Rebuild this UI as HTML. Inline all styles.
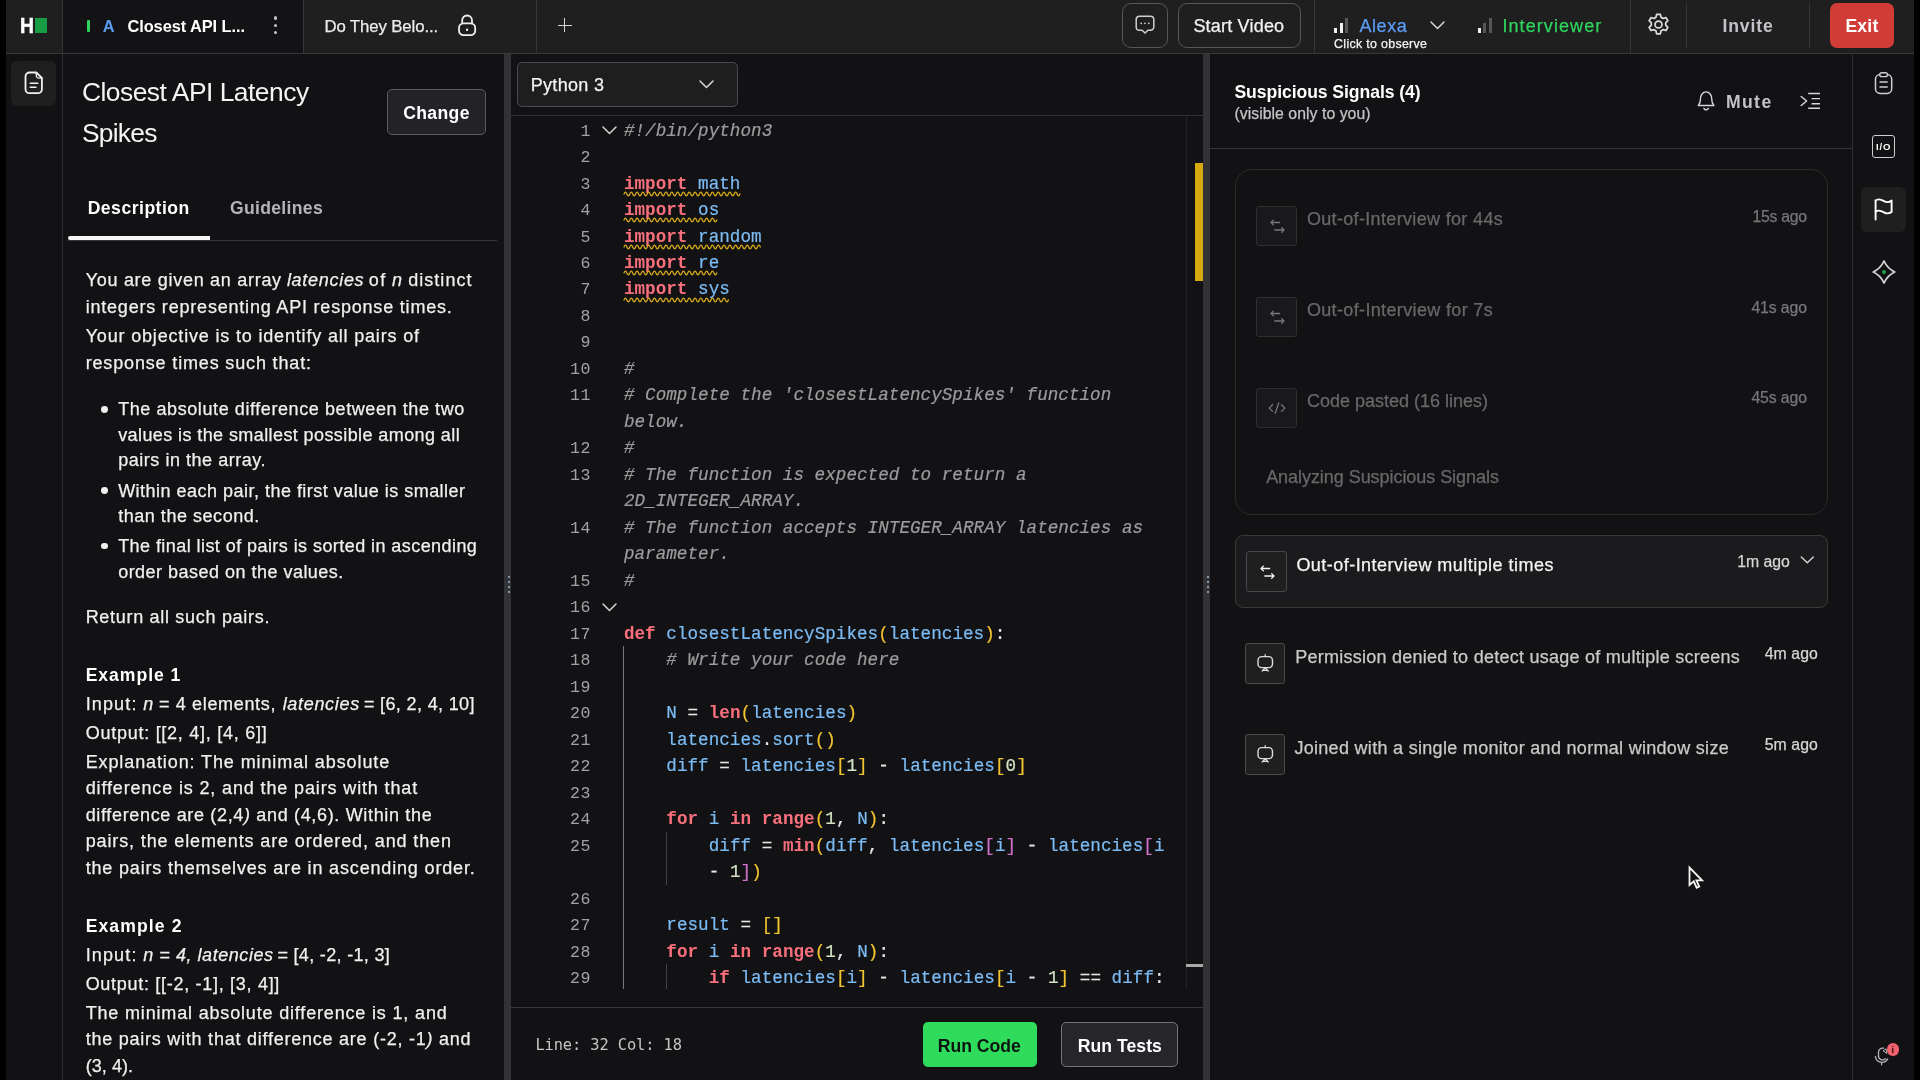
<!DOCTYPE html>
<html lang="en">
<head>
<meta charset="utf-8">
<title>Closest API Latency Spikes - Interview</title>
<style>
*{box-sizing:border-box;margin:0;padding:0}
html,body{width:1920px;height:1080px;overflow:hidden;background:#000}
body{position:relative;font-family:"Liberation Sans",sans-serif;color:#fff}
#root{position:absolute;left:0;top:0;width:1920px;height:1080px;will-change:transform}
#app{position:absolute;left:6px;top:0;width:1908px;height:1080px;background:#121214;overflow:hidden}
.b{position:absolute;display:block}
.t{position:absolute;white-space:pre;line-height:1;font-family:"Liberation Sans",sans-serif}
.r{-webkit-text-stroke:0.25px}
.m{-webkit-text-stroke:0.2px;font-family:"Liberation Mono",monospace}
.d{font-family:"DejaVu Sans Mono","Liberation Mono",monospace}
i{font-style:italic}
b{font-weight:700;-webkit-text-stroke:0}
</style>
</head>
<body>
<div id="root">
<div id="app"></div>
<!-- top -->
<div class="b" style="left:6px;top:0px;width:1908px;height:53px;background:#1f1f1f;"></div>
<div class="b" style="left:6px;top:53px;width:1908px;height:1px;background:#37373b;"></div>
<div class="b" style="left:62px;top:0px;width:1px;height:53px;background:#37373b;"></div>
<div class="t" style="left:19.90px;top:16px;font-size:21.5px;color:#fff;font-weight:700;transform:scaleX(0.9);transform-origin:0 0;-webkit-text-stroke:0.5px;">H</div>
<div class="b" style="left:35px;top:18px;width:12px;height:15px;background:#189c44;"></div>
<div class="b" style="left:63px;top:0px;width:240px;height:53px;background:#131315;"></div>
<div class="b" style="left:303px;top:0px;width:1px;height:53px;background:#37373b;"></div>
<div class="b" style="left:87.2px;top:20px;width:2.6px;height:12px;background:#2fd45c;border-radius:1px;"></div>
<div class="t" style="letter-spacing:0.956px;left:102.80px;top:18px;font-size:16.4px;color:#5b9cf0;font-weight:700;">A</div>
<div class="t" style="letter-spacing:-0.070px;left:127.40px;top:18px;font-size:16.4px;color:#fff;font-weight:700;">Closest API L...</div>
<div class="b" style="left:273.7px;top:16.4px;width:3.2px;height:3.2px;background:#c4c4c8;border-radius:50%;"></div>
<div class="b" style="left:273.7px;top:23.599999999999998px;width:3.2px;height:3.2px;background:#c4c4c8;border-radius:50%;"></div>
<div class="b" style="left:273.7px;top:30.9px;width:3.2px;height:3.2px;background:#c4c4c8;border-radius:50%;"></div>
<div class="t r" style="letter-spacing:-0.111px;left:324.40px;top:19px;font-size:16.8px;color:#ececec;">Do They Belo...</div>
<svg class="b" style="left:456px;top:14px;" width="22" height="23" viewBox="0 0 22 23" fill="none" stroke-linecap="round" stroke-linejoin="round"><path d="M6.200 9.300V6.400a4.900 4.900 0 0 1 9.800 0v2.900" stroke="#f0f0f0" stroke-width="1.800"/><rect x="3" y="9.300" width="16.200" height="11.900" rx="4.600" stroke="#f0f0f0" stroke-width="1.800"/><path d="M11.100 14.600v2.400" stroke="#f0f0f0" stroke-width="1.900" stroke-linecap="butt"/></svg>
<div class="b" style="left:536px;top:0px;width:1px;height:53px;background:#37373b;"></div>
<div class="b" style="left:557.5px;top:24.6px;width:14px;height:1.5px;background:#d8d8d8;"></div>
<div class="b" style="left:563.8px;top:18.3px;width:1.5px;height:14px;background:#d8d8d8;"></div>
<div class="b" style="left:1122px;top:3px;width:45.5px;height:45px;border:1px solid #55555b;border-radius:9px;"></div>
<svg class="b" style="left:1134px;top:14px;" width="22" height="22" viewBox="0 0 22 22" fill="none" stroke-linecap="round" stroke-linejoin="round"><path d="M5.5 2.2h11a3.3 3.3 0 0 1 3.3 3.3v7.4a3.3 3.3 0 0 1-3.3 3.3h-2.6L11 19l-2.9-2.8H5.5a3.3 3.3 0 0 1-3.3-3.3V5.500a3.3 3.3 0 0 1 3.3-3.3z" stroke="#d0d0d4" stroke-width="1.5"/><circle cx="7.2" cy="9.3" r="0.9" fill="#d0d0d4"/><circle cx="11" cy="9.3" r="0.9" fill="#d0d0d4"/><circle cx="14.8" cy="9.3" r="0.9" fill="#d0d0d4"/></svg>
<div class="b" style="left:1177.5px;top:3px;width:123.5px;height:45px;border:1px solid #55555b;border-radius:9px;"></div>
<div class="t r" style="letter-spacing:0.201px;left:1193.40px;top:17px;font-size:18.0px;color:#f2f2f2;">Start Video</div>
<div class="b" style="left:1314px;top:0px;width:1px;height:53px;background:#37373b;"></div>
<div class="b" style="left:1334px;top:28px;width:3px;height:4.5px;background:#f0f0f0;"></div>
<div class="b" style="left:1339.5px;top:23px;width:3px;height:9.5px;background:#f0f0f0;"></div>
<div class="b" style="left:1345px;top:18px;width:3px;height:14.5px;background:#55555a;"></div>
<div class="t r" style="letter-spacing:0.574px;left:1359.40px;top:17px;font-size:18.0px;color:#5b9cf5;">Alexa</div>
<svg class="b" style="left:1429px;top:20px;" width="17" height="11" viewBox="0 0 17 11" fill="none" stroke-linecap="round" stroke-linejoin="round"><path d="M2 2l6.5 6.5L15 2" stroke="#d8d8d8" stroke-width="1.5"/></svg>
<div class="t r" style="letter-spacing:0.315px;left:1334.10px;top:38px;font-size:12.4px;color:#f4f4f4;">Click to observe</div>
<div class="b" style="left:1477.5px;top:28px;width:3px;height:4.5px;background:#f0f0f0;"></div>
<div class="b" style="left:1483px;top:23px;width:3px;height:9.5px;background:#55555a;"></div>
<div class="b" style="left:1488.5px;top:18px;width:3px;height:14.5px;background:#55555a;"></div>
<div class="t r" style="letter-spacing:1.079px;left:1502.40px;top:17px;font-size:18.0px;color:#2fd45c;">Interviewer</div>
<div class="b" style="left:1630px;top:0px;width:1px;height:53px;background:#37373b;"></div>
<svg class="b" style="left:1646px;top:12.2px;" width="25" height="25" viewBox="0 0 23 23" fill="none" stroke-linecap="round" stroke-linejoin="round"><circle cx="11.500" cy="11.500" r="3.200" stroke="#dcdcdc" stroke-width="1.600"/><path d="M9.800 1.600h3.400l.700 2.700a7.500 7.500 0 0 1 1.800 1l2.700-.800 1.700 2.900-2 2a7.500 7.500 0 0 1 0 2.100l2 2-1.700 2.900-2.700-.8a7.500 7.500 0 0 1-1.800 1l-.7 2.800H9.800l-.7-2.800a7.500 7.500 0 0 1-1.800-1l-2.700.8-1.700-2.900 2-2a7.500 7.500 0 0 1 0-2.100l-2-2 1.700-2.900 2.700.8a7.500 7.500 0 0 1 1.800-1z" stroke="#dcdcdc" stroke-width="1.600" transform="translate(0,0.650)"/></svg>
<div class="b" style="left:1686px;top:3px;width:1px;height:45px;background:#37373b;"></div>
<div class="t" style="letter-spacing:0.874px;left:1722.40px;top:18px;font-size:17.6px;color:#c2c2c8;font-weight:700;">Invite</div>
<div class="b" style="left:1809px;top:3px;width:1px;height:45px;background:#37373b;"></div>
<div class="b" style="left:1830px;top:2.5px;width:64px;height:45.5px;background:#d13c36;border-radius:7px;"></div>
<div class="t" style="letter-spacing:0.230px;left:1845.40px;top:18px;font-size:17.6px;color:#fff;font-weight:700;">Exit</div>
<!-- left -->
<div class="b" style="left:62px;top:54px;width:1px;height:1026px;background:#2e2e32;"></div>
<div class="b" style="left:11px;top:61px;width:45px;height:45px;background:#1f1f1f;border-radius:6px;"></div>
<svg class="b" style="left:22px;top:71px;" width="24" height="25" viewBox="0 0 24 25" fill="none" stroke-linecap="round" stroke-linejoin="round"><path d="M7.5 1.500h6.800l5.600 5.500v11.200a4 4 0 0 1-4 4H7.500a4 4 0 0 1-4-4V5.500a4 4 0 0 1 4-4z" stroke="#f2f2f2" stroke-width="1.800"/><path d="M14.300 1.700v2.800a2.600 2.600 0 0 0 2.600 2.600h2.800" stroke="#f2f2f2" stroke-width="1.300"/><path d="M8.300 12.300h7.400M8.300 16.300h5.600" stroke="#f2f2f2" stroke-width="1.600"/></svg>
<div class="t r" style="letter-spacing:-0.499px;left:81.90px;top:79px;font-size:26.4px;color:#f4f4f4;-webkit-text-stroke:0;">Closest API Latency</div>
<div class="t r" style="letter-spacing:-0.753px;left:81.90px;top:120px;font-size:26.4px;color:#f4f4f4;-webkit-text-stroke:0;">Spikes</div>
<div class="b" style="left:387px;top:89px;width:98.5px;height:45.5px;background:#232327;border:1px solid #5a5a60;border-radius:5px;"></div>
<div class="t" style="letter-spacing:0.361px;left:403.15px;top:105px;font-size:17.6px;color:#fff;font-weight:700;">Change</div>
<div class="t" style="letter-spacing:0.491px;left:87.65px;top:200px;font-size:17.6px;color:#fff;font-weight:700;">Description</div>
<div class="t" style="letter-spacing:0.325px;left:229.90px;top:200px;font-size:17.6px;color:#b4b4ba;font-weight:700;">Guidelines</div>
<div class="b" style="left:68px;top:240px;width:429px;height:1px;background:#36363a;"></div>
<div class="b" style="left:68px;top:236px;width:142px;height:4px;background:#f6f6f6;border-radius:2px 0 0 2px;"></div>
<div class="t r" style="letter-spacing:0.715px;left:85.65px;top:271px;font-size:18.0px;color:#f0f0f0;">You are given an array</div>
<div class="t r" style="letter-spacing:0.711px;left:286.90px;top:271px;font-size:18.0px;color:#f0f0f0;font-style:italic;">latencies</div>
<div class="t r" style="letter-spacing:1.592px;left:368.65px;top:271px;font-size:18.0px;color:#f0f0f0;">of</div>
<div class="t r" style="letter-spacing:1.684px;left:391.90px;top:271px;font-size:18.0px;color:#f0f0f0;font-style:italic;">n</div>
<div class="t r" style="letter-spacing:1.052px;left:408.15px;top:271px;font-size:18.0px;color:#f0f0f0;">distinct</div>
<div class="t r" style="letter-spacing:0.799px;left:85.65px;top:298px;font-size:18.0px;color:#f0f0f0;">integers representing API response times.</div>
<div class="t r" style="letter-spacing:0.826px;left:85.65px;top:327px;font-size:18.0px;color:#f0f0f0;">Your objective is to identify all pairs of</div>
<div class="t r" style="letter-spacing:0.844px;left:85.65px;top:354px;font-size:18.0px;color:#f0f0f0;">response times such that:</div>
<div class="b" style="left:101px;top:406.1px;width:6.8px;height:6.8px;background:#f0f0f0;border-radius:50%;"></div>
<div class="b" style="left:101px;top:487.3px;width:6.8px;height:6.8px;background:#f0f0f0;border-radius:50%;"></div>
<div class="b" style="left:101px;top:542.6px;width:6.8px;height:6.8px;background:#f0f0f0;border-radius:50%;"></div>
<div class="t r" style="letter-spacing:0.585px;left:118.15px;top:400px;font-size:18.0px;color:#f0f0f0;">The absolute difference between the two</div>
<div class="t r" style="letter-spacing:0.409px;left:118.15px;top:426px;font-size:18.0px;color:#f0f0f0;">values is the smallest possible among all</div>
<div class="t r" style="letter-spacing:0.538px;left:118.15px;top:451px;font-size:18.0px;color:#f0f0f0;">pairs in the array.</div>
<div class="t r" style="letter-spacing:0.484px;left:118.15px;top:482px;font-size:18.0px;color:#f0f0f0;">Within each pair, the first value is smaller</div>
<div class="t r" style="letter-spacing:0.537px;left:118.15px;top:507px;font-size:18.0px;color:#f0f0f0;">than the second.</div>
<div class="t r" style="letter-spacing:0.435px;left:118.15px;top:537px;font-size:18.0px;color:#f0f0f0;">The final list of pairs is sorted in ascending</div>
<div class="t r" style="letter-spacing:0.482px;left:118.15px;top:563px;font-size:18.0px;color:#f0f0f0;">order based on the values.</div>
<div class="t r" style="letter-spacing:0.699px;left:85.65px;top:608px;font-size:18.0px;color:#f0f0f0;">Return all such pairs.</div>
<div class="t" style="letter-spacing:0.961px;left:85.65px;top:667px;font-size:17.6px;color:#fff;font-weight:700;">Example 1</div>
<div class="t r" style="letter-spacing:1.151px;left:85.65px;top:695px;font-size:18.0px;color:#f0f0f0;">Input:</div>
<div class="t r" style="letter-spacing:1.934px;left:143.15px;top:695px;font-size:18.0px;color:#f0f0f0;font-style:italic;">n</div>
<div class="t r" style="letter-spacing:0.664px;left:158.90px;top:695px;font-size:18.0px;color:#f0f0f0;">= 4 elements,</div>
<div class="t r" style="letter-spacing:0.684px;left:282.65px;top:695px;font-size:18.0px;color:#f0f0f0;font-style:italic;">latencies</div>
<div class="t r" style="letter-spacing:0.358px;left:363.90px;top:695px;font-size:18.0px;color:#f0f0f0;">= [6, 2, 4, 10]</div>
<div class="t r" style="letter-spacing:0.744px;left:85.65px;top:724px;font-size:18.0px;color:#f0f0f0;">Output: [[2, 4], [4, 6]]</div>
<div class="t r" style="letter-spacing:0.898px;left:85.65px;top:753px;font-size:18.0px;color:#f0f0f0;">Explanation: The minimal absolute</div>
<div class="t r" style="letter-spacing:0.865px;left:85.65px;top:779px;font-size:18.0px;color:#f0f0f0;">difference is 2, and the pairs with that</div>
<div class="t r" style="letter-spacing:0.663px;left:85.65px;top:806px;font-size:18.0px;color:#f0f0f0;">difference are (2,4<i>)</i> and (4,6). Within the</div>
<div class="t r" style="letter-spacing:0.878px;left:85.65px;top:832px;font-size:18.0px;color:#f0f0f0;">pairs, the elements are ordered, and then</div>
<div class="t r" style="letter-spacing:0.835px;left:85.65px;top:859px;font-size:18.0px;color:#f0f0f0;">the pairs themselves are in ascending order.</div>
<div class="t" style="letter-spacing:1.100px;left:85.65px;top:918px;font-size:17.6px;color:#fff;font-weight:700;">Example 2</div>
<div class="t r" style="letter-spacing:1.151px;left:85.65px;top:946px;font-size:18.0px;color:#f0f0f0;">Input:</div>
<div class="t r" style="letter-spacing:0.554px;left:143.15px;top:946px;font-size:18.0px;color:#f0f0f0;font-style:italic;">n = 4, latencies</div>
<div class="t r" style="letter-spacing:0.321px;left:277.40px;top:946px;font-size:18.0px;color:#f0f0f0;">= [4, -2, -1, 3]</div>
<div class="t r" style="letter-spacing:0.706px;left:85.65px;top:975px;font-size:18.0px;color:#f0f0f0;">Output: [[-2, -1], [3, 4]]</div>
<div class="t r" style="letter-spacing:0.831px;left:85.65px;top:1004px;font-size:18.0px;color:#f0f0f0;">The minimal absolute difference is 1, and</div>
<div class="t r" style="letter-spacing:0.762px;left:85.65px;top:1030px;font-size:18.0px;color:#f0f0f0;">the pairs with that difference are (-2, -1<i>)</i> and</div>
<div class="t r" style="letter-spacing:0.062px;left:85.65px;top:1057px;font-size:18.0px;color:#f0f0f0;">(3, 4).</div>
<div class="b" style="left:504px;top:54px;width:7px;height:1026px;background:#333336;"></div>
<div class="b" style="left:508.2px;top:575.5px;width:2px;height:2px;background:#8296ac;"></div>
<div class="b" style="left:508.2px;top:580.5px;width:2px;height:2px;background:#8296ac;"></div>
<div class="b" style="left:508.2px;top:585.5px;width:2px;height:2px;background:#8296ac;"></div>
<div class="b" style="left:508.2px;top:590.5px;width:2px;height:2px;background:#8296ac;"></div>
<!-- editor -->
<div class="b" style="left:517px;top:62px;width:221px;height:45px;background:#1e1e1e;border:1px solid #4a4a50;border-radius:5px;"></div>
<div class="t r" style="letter-spacing:0.330px;left:530.65px;top:76px;font-size:18.0px;color:#f2f2f2;">Python 3</div>
<svg class="b" style="left:698px;top:79px;" width="17" height="11" viewBox="0 0 17 11" fill="none" stroke-linecap="round" stroke-linejoin="round"><path d="M2 2l6.500 6.500L15 2" stroke="#d8d8d8" stroke-width="1.500"/></svg>
<div class="b" style="left:511px;top:115px;width:692px;height:1px;background:#323236;"></div>
<div class="t m" style="left:580.62px;top:124px;font-size:16.6px;letter-spacing:0.638px;color:#a2a2a4;-webkit-text-stroke:0">1</div>
<div class="t m" style="left:623.90px;top:123px;font-size:17.6px;letter-spacing:0.038px;color:#e6e6e6"><i style="color:#9c9c9e">#!/bin/python3</i></div>
<div class="t m" style="left:580.62px;top:150px;font-size:16.6px;letter-spacing:0.638px;color:#a2a2a4;-webkit-text-stroke:0">2</div>
<div class="t m" style="left:580.62px;top:177px;font-size:16.6px;letter-spacing:0.638px;color:#a2a2a4;-webkit-text-stroke:0">3</div>
<div class="t m" style="left:623.90px;top:176px;font-size:17.6px;letter-spacing:0.038px;color:#e6e6e6"><b style="color:#f9707c">import</b> <span style="color:#7cbcf5">math</span></div>
<div class="t m" style="left:580.62px;top:203px;font-size:16.6px;letter-spacing:0.638px;color:#a2a2a4;-webkit-text-stroke:0">4</div>
<div class="t m" style="left:623.90px;top:202px;font-size:17.6px;letter-spacing:0.038px;color:#e6e6e6"><b style="color:#f9707c">import</b> <span style="color:#7cbcf5">os</span></div>
<div class="t m" style="left:580.62px;top:230px;font-size:16.6px;letter-spacing:0.638px;color:#a2a2a4;-webkit-text-stroke:0">5</div>
<div class="t m" style="left:623.90px;top:229px;font-size:17.6px;letter-spacing:0.038px;color:#e6e6e6"><b style="color:#f9707c">import</b> <span style="color:#7cbcf5">random</span></div>
<div class="t m" style="left:580.62px;top:256px;font-size:16.6px;letter-spacing:0.638px;color:#a2a2a4;-webkit-text-stroke:0">6</div>
<div class="t m" style="left:623.90px;top:255px;font-size:17.6px;letter-spacing:0.038px;color:#e6e6e6"><b style="color:#f9707c">import</b> <span style="color:#7cbcf5">re</span></div>
<div class="t m" style="left:580.62px;top:282px;font-size:16.6px;letter-spacing:0.638px;color:#a2a2a4;-webkit-text-stroke:0">7</div>
<div class="t m" style="left:623.90px;top:281px;font-size:17.6px;letter-spacing:0.038px;color:#e6e6e6"><b style="color:#f9707c">import</b> <span style="color:#7cbcf5">sys</span></div>
<div class="t m" style="left:580.62px;top:309px;font-size:16.6px;letter-spacing:0.638px;color:#a2a2a4;-webkit-text-stroke:0">8</div>
<div class="t m" style="left:580.62px;top:335px;font-size:16.6px;letter-spacing:0.638px;color:#a2a2a4;-webkit-text-stroke:0">9</div>
<div class="t m" style="left:570.02px;top:362px;font-size:16.6px;letter-spacing:0.638px;color:#a2a2a4;-webkit-text-stroke:0">10</div>
<div class="t m" style="left:623.90px;top:361px;font-size:17.6px;letter-spacing:0.038px;color:#e6e6e6"><i style="color:#9c9c9e">#</i></div>
<div class="t m" style="left:570.02px;top:388px;font-size:16.6px;letter-spacing:0.638px;color:#a2a2a4;-webkit-text-stroke:0">11</div>
<div class="t m" style="left:623.90px;top:387px;font-size:17.6px;letter-spacing:0.038px;color:#e6e6e6"><i style="color:#9c9c9e"># Complete the 'closestLatencySpikes' function</i></div>
<div class="t m" style="left:623.90px;top:414px;font-size:17.6px;letter-spacing:0.038px;color:#e6e6e6"><i style="color:#9c9c9e">below.</i></div>
<div class="t m" style="left:570.02px;top:441px;font-size:16.6px;letter-spacing:0.638px;color:#a2a2a4;-webkit-text-stroke:0">12</div>
<div class="t m" style="left:623.90px;top:440px;font-size:17.6px;letter-spacing:0.038px;color:#e6e6e6"><i style="color:#9c9c9e">#</i></div>
<div class="t m" style="left:570.02px;top:468px;font-size:16.6px;letter-spacing:0.638px;color:#a2a2a4;-webkit-text-stroke:0">13</div>
<div class="t m" style="left:623.90px;top:467px;font-size:17.6px;letter-spacing:0.038px;color:#e6e6e6"><i style="color:#9c9c9e"># The function is expected to return a</i></div>
<div class="t m" style="left:623.90px;top:493px;font-size:17.6px;letter-spacing:0.038px;color:#e6e6e6"><i style="color:#9c9c9e">2D_INTEGER_ARRAY.</i></div>
<div class="t m" style="left:570.02px;top:521px;font-size:16.6px;letter-spacing:0.638px;color:#a2a2a4;-webkit-text-stroke:0">14</div>
<div class="t m" style="left:623.90px;top:520px;font-size:17.6px;letter-spacing:0.038px;color:#e6e6e6"><i style="color:#9c9c9e"># The function accepts INTEGER_ARRAY latencies as</i></div>
<div class="t m" style="left:623.90px;top:546px;font-size:17.6px;letter-spacing:0.038px;color:#e6e6e6"><i style="color:#9c9c9e">parameter.</i></div>
<div class="t m" style="left:570.02px;top:574px;font-size:16.6px;letter-spacing:0.638px;color:#a2a2a4;-webkit-text-stroke:0">15</div>
<div class="t m" style="left:623.90px;top:573px;font-size:17.6px;letter-spacing:0.038px;color:#e6e6e6"><i style="color:#9c9c9e">#</i></div>
<div class="t m" style="left:570.02px;top:600px;font-size:16.6px;letter-spacing:0.638px;color:#a2a2a4;-webkit-text-stroke:0">16</div>
<div class="t m" style="left:570.02px;top:627px;font-size:16.6px;letter-spacing:0.638px;color:#a2a2a4;-webkit-text-stroke:0">17</div>
<div class="t m" style="left:623.90px;top:626px;font-size:17.6px;letter-spacing:0.038px;color:#e6e6e6"><b style="color:#f9707c">def</b> <span style="color:#7cbcf5">closestLatencySpikes</span><span style="color:#f2c430">(</span><span style="color:#7cbcf5">latencies</span><span style="color:#f2c430">)</span><span style="color:#e6e6e6">:</span></div>
<div class="t m" style="left:570.02px;top:653px;font-size:16.6px;letter-spacing:0.638px;color:#a2a2a4;-webkit-text-stroke:0">18</div>
<div class="t m" style="left:666.30px;top:652px;font-size:17.6px;letter-spacing:0.038px;color:#e6e6e6"><i style="color:#9c9c9e"># Write your code here</i></div>
<div class="t m" style="left:570.02px;top:680px;font-size:16.6px;letter-spacing:0.638px;color:#a2a2a4;-webkit-text-stroke:0">19</div>
<div class="t m" style="left:570.02px;top:706px;font-size:16.6px;letter-spacing:0.638px;color:#a2a2a4;-webkit-text-stroke:0">20</div>
<div class="t m" style="left:666.30px;top:705px;font-size:17.6px;letter-spacing:0.038px;color:#e6e6e6"><span style="color:#7cbcf5">N</span> <span style="color:#e6e6e6">=</span> <b style="color:#f9707c">len</b><span style="color:#f2c430">(</span><span style="color:#7cbcf5">latencies</span><span style="color:#f2c430">)</span></div>
<div class="t m" style="left:570.02px;top:733px;font-size:16.6px;letter-spacing:0.638px;color:#a2a2a4;-webkit-text-stroke:0">21</div>
<div class="t m" style="left:666.30px;top:732px;font-size:17.6px;letter-spacing:0.038px;color:#e6e6e6"><span style="color:#7cbcf5">latencies</span><span style="color:#e6e6e6">.</span><span style="color:#7cbcf5">sort</span><span style="color:#f2c430">()</span></div>
<div class="t m" style="left:570.02px;top:759px;font-size:16.6px;letter-spacing:0.638px;color:#a2a2a4;-webkit-text-stroke:0">22</div>
<div class="t m" style="left:666.30px;top:758px;font-size:17.6px;letter-spacing:0.038px;color:#e6e6e6"><span style="color:#7cbcf5">diff</span> <span style="color:#e6e6e6">=</span> <span style="color:#7cbcf5">latencies</span><span style="color:#f2c430">[</span><span style="color:#d4e4c4">1</span><span style="color:#f2c430">]</span> <span style="color:#e6e6e6">-</span> <span style="color:#7cbcf5">latencies</span><span style="color:#f2c430">[</span><span style="color:#d4e4c4">0</span><span style="color:#f2c430">]</span></div>
<div class="t m" style="left:570.02px;top:786px;font-size:16.6px;letter-spacing:0.638px;color:#a2a2a4;-webkit-text-stroke:0">23</div>
<div class="t m" style="left:570.02px;top:812px;font-size:16.6px;letter-spacing:0.638px;color:#a2a2a4;-webkit-text-stroke:0">24</div>
<div class="t m" style="left:666.30px;top:811px;font-size:17.6px;letter-spacing:0.038px;color:#e6e6e6"><b style="color:#f9707c">for</b> <span style="color:#7cbcf5">i</span> <b style="color:#f9707c">in</b> <b style="color:#f9707c">range</b><span style="color:#f2c430">(</span><span style="color:#d4e4c4">1</span><span style="color:#e6e6e6">,</span> <span style="color:#7cbcf5">N</span><span style="color:#f2c430">)</span><span style="color:#e6e6e6">:</span></div>
<div class="t m" style="left:570.02px;top:839px;font-size:16.6px;letter-spacing:0.638px;color:#a2a2a4;-webkit-text-stroke:0">25</div>
<div class="t m" style="left:708.70px;top:838px;font-size:17.6px;letter-spacing:0.038px;color:#e6e6e6"><span style="color:#7cbcf5">diff</span> <span style="color:#e6e6e6">=</span> <b style="color:#f9707c">min</b><span style="color:#f2c430">(</span><span style="color:#7cbcf5">diff</span><span style="color:#e6e6e6">,</span> <span style="color:#7cbcf5">latencies</span><span style="color:#cf6fcb">[</span><span style="color:#7cbcf5">i</span><span style="color:#cf6fcb">]</span> <span style="color:#e6e6e6">-</span> <span style="color:#7cbcf5">latencies</span><span style="color:#cf6fcb">[</span><span style="color:#7cbcf5">i</span></div>
<div class="t m" style="left:708.70px;top:864px;font-size:17.6px;letter-spacing:0.038px;color:#e6e6e6"><span style="color:#e6e6e6">-</span> <span style="color:#d4e4c4">1</span><span style="color:#cf6fcb">]</span><span style="color:#f2c430">)</span></div>
<div class="t m" style="left:570.02px;top:892px;font-size:16.6px;letter-spacing:0.638px;color:#a2a2a4;-webkit-text-stroke:0">26</div>
<div class="t m" style="left:570.02px;top:918px;font-size:16.6px;letter-spacing:0.638px;color:#a2a2a4;-webkit-text-stroke:0">27</div>
<div class="t m" style="left:666.30px;top:917px;font-size:17.6px;letter-spacing:0.038px;color:#e6e6e6"><span style="color:#7cbcf5">result</span> <span style="color:#e6e6e6">=</span> <span style="color:#f2c430">[]</span></div>
<div class="t m" style="left:570.02px;top:945px;font-size:16.6px;letter-spacing:0.638px;color:#a2a2a4;-webkit-text-stroke:0">28</div>
<div class="t m" style="left:666.30px;top:944px;font-size:17.6px;letter-spacing:0.038px;color:#e6e6e6"><b style="color:#f9707c">for</b> <span style="color:#7cbcf5">i</span> <b style="color:#f9707c">in</b> <b style="color:#f9707c">range</b><span style="color:#f2c430">(</span><span style="color:#d4e4c4">1</span><span style="color:#e6e6e6">,</span> <span style="color:#7cbcf5">N</span><span style="color:#f2c430">)</span><span style="color:#e6e6e6">:</span></div>
<div class="t m" style="left:570.02px;top:971px;font-size:16.6px;letter-spacing:0.638px;color:#a2a2a4;-webkit-text-stroke:0">29</div>
<div class="t m" style="left:708.70px;top:970px;font-size:17.6px;letter-spacing:0.038px;color:#e6e6e6"><b style="color:#f9707c">if</b> <span style="color:#7cbcf5">latencies</span><span style="color:#f2c430">[</span><span style="color:#7cbcf5">i</span><span style="color:#f2c430">]</span> <span style="color:#e6e6e6">-</span> <span style="color:#7cbcf5">latencies</span><span style="color:#f2c430">[</span><span style="color:#7cbcf5">i</span> <span style="color:#e6e6e6">-</span> <span style="color:#d4e4c4">1</span><span style="color:#f2c430">]</span> <span style="color:#e6e6e6">==</span> <span style="color:#7cbcf5">diff</span><span style="color:#e6e6e6">:</span></div>
<svg class="b" style="left:623.5px;top:190.98px;overflow:visible;" width="116" height="6" viewBox="0 0 116 6" fill="none" stroke-linecap="round" stroke-linejoin="round"><path d="M0 3Q1.45 -0.6 2.90 3Q4.35 6.6 5.80 3Q7.25 -0.6 8.70 3Q10.15 6.6 11.60 3Q13.05 -0.6 14.50 3Q15.95 6.6 17.40 3Q18.85 -0.6 20.30 3Q21.75 6.6 23.20 3Q24.65 -0.6 26.10 3Q27.55 6.6 29.00 3Q30.45 -0.6 31.90 3Q33.35 6.6 34.80 3Q36.25 -0.6 37.70 3Q39.15 6.6 40.60 3Q42.05 -0.6 43.50 3Q44.95 6.6 46.40 3Q47.85 -0.6 49.30 3Q50.75 6.6 52.20 3Q53.65 -0.6 55.10 3Q56.55 6.6 58.00 3Q59.45 -0.6 60.90 3Q62.35 6.6 63.80 3Q65.25 -0.6 66.70 3Q68.15 6.6 69.60 3Q71.05 -0.6 72.50 3Q73.95 6.6 75.40 3Q76.85 -0.6 78.30 3Q79.75 6.6 81.20 3Q82.65 -0.6 84.10 3Q85.55 6.6 87.00 3Q88.45 -0.6 89.90 3Q91.35 6.6 92.80 3Q94.25 -0.6 95.70 3Q97.15 6.6 98.60 3Q100.05 -0.6 101.50 3Q102.95 6.6 104.40 3Q105.85 -0.6 107.30 3Q108.75 6.6 110.20 3Q111.65 -0.6 113.10 3Q114.55 6.6 116.00 3" stroke="#d9ab1c" stroke-width="1.300"/></svg>
<svg class="b" style="left:623.5px;top:217.47px;overflow:visible;" width="94" height="6" viewBox="0 0 94 6" fill="none" stroke-linecap="round" stroke-linejoin="round"><path d="M0 3Q1.45 -0.6 2.90 3Q4.35 6.6 5.80 3Q7.25 -0.6 8.70 3Q10.15 6.6 11.60 3Q13.05 -0.6 14.50 3Q15.95 6.6 17.40 3Q18.85 -0.6 20.30 3Q21.75 6.6 23.20 3Q24.65 -0.6 26.10 3Q27.55 6.6 29.00 3Q30.45 -0.6 31.90 3Q33.35 6.6 34.80 3Q36.25 -0.6 37.70 3Q39.15 6.6 40.60 3Q42.05 -0.6 43.50 3Q44.95 6.6 46.40 3Q47.85 -0.6 49.30 3Q50.75 6.6 52.20 3Q53.65 -0.6 55.10 3Q56.55 6.6 58.00 3Q59.45 -0.6 60.90 3Q62.35 6.6 63.80 3Q65.25 -0.6 66.70 3Q68.15 6.6 69.60 3Q71.05 -0.6 72.50 3Q73.95 6.6 75.40 3Q76.85 -0.6 78.30 3Q79.75 6.6 81.20 3Q82.65 -0.6 84.10 3Q85.55 6.6 87.00 3Q88.45 -0.6 89.90 3Q91.35 6.6 92.80 3" stroke="#d9ab1c" stroke-width="1.300"/></svg>
<svg class="b" style="left:623.5px;top:243.96px;overflow:visible;" width="137" height="6" viewBox="0 0 137 6" fill="none" stroke-linecap="round" stroke-linejoin="round"><path d="M0 3Q1.45 -0.6 2.90 3Q4.35 6.6 5.80 3Q7.25 -0.6 8.70 3Q10.15 6.6 11.60 3Q13.05 -0.6 14.50 3Q15.95 6.6 17.40 3Q18.85 -0.6 20.30 3Q21.75 6.6 23.20 3Q24.65 -0.6 26.10 3Q27.55 6.6 29.00 3Q30.45 -0.6 31.90 3Q33.35 6.6 34.80 3Q36.25 -0.6 37.70 3Q39.15 6.6 40.60 3Q42.05 -0.6 43.50 3Q44.95 6.6 46.40 3Q47.85 -0.6 49.30 3Q50.75 6.6 52.20 3Q53.65 -0.6 55.10 3Q56.55 6.6 58.00 3Q59.45 -0.6 60.90 3Q62.35 6.6 63.80 3Q65.25 -0.6 66.70 3Q68.15 6.6 69.60 3Q71.05 -0.6 72.50 3Q73.95 6.6 75.40 3Q76.85 -0.6 78.30 3Q79.75 6.6 81.20 3Q82.65 -0.6 84.10 3Q85.55 6.6 87.00 3Q88.45 -0.6 89.90 3Q91.35 6.6 92.80 3Q94.25 -0.6 95.70 3Q97.15 6.6 98.60 3Q100.05 -0.6 101.50 3Q102.95 6.6 104.40 3Q105.85 -0.6 107.30 3Q108.75 6.6 110.20 3Q111.65 -0.6 113.10 3Q114.55 6.6 116.00 3Q117.45 -0.6 118.90 3Q120.35 6.6 121.80 3Q123.25 -0.6 124.70 3Q126.15 6.6 127.60 3Q129.05 -0.6 130.50 3Q131.95 6.6 133.40 3Q134.85 -0.6 136.30 3" stroke="#d9ab1c" stroke-width="1.300"/></svg>
<svg class="b" style="left:623.5px;top:270.44999999999993px;overflow:visible;" width="94" height="6" viewBox="0 0 94 6" fill="none" stroke-linecap="round" stroke-linejoin="round"><path d="M0 3Q1.45 -0.6 2.90 3Q4.35 6.6 5.80 3Q7.25 -0.6 8.70 3Q10.15 6.6 11.60 3Q13.05 -0.6 14.50 3Q15.95 6.6 17.40 3Q18.85 -0.6 20.30 3Q21.75 6.6 23.20 3Q24.65 -0.6 26.10 3Q27.55 6.6 29.00 3Q30.45 -0.6 31.90 3Q33.35 6.6 34.80 3Q36.25 -0.6 37.70 3Q39.15 6.6 40.60 3Q42.05 -0.6 43.50 3Q44.95 6.6 46.40 3Q47.85 -0.6 49.30 3Q50.75 6.6 52.20 3Q53.65 -0.6 55.10 3Q56.55 6.6 58.00 3Q59.45 -0.6 60.90 3Q62.35 6.6 63.80 3Q65.25 -0.6 66.70 3Q68.15 6.6 69.60 3Q71.05 -0.6 72.50 3Q73.95 6.6 75.40 3Q76.85 -0.6 78.30 3Q79.75 6.6 81.20 3Q82.65 -0.6 84.10 3Q85.55 6.6 87.00 3Q88.45 -0.6 89.90 3Q91.35 6.6 92.80 3" stroke="#d9ab1c" stroke-width="1.300"/></svg>
<svg class="b" style="left:623.5px;top:296.93999999999994px;overflow:visible;" width="105" height="6" viewBox="0 0 105 6" fill="none" stroke-linecap="round" stroke-linejoin="round"><path d="M0 3Q1.45 -0.6 2.90 3Q4.35 6.6 5.80 3Q7.25 -0.6 8.70 3Q10.15 6.6 11.60 3Q13.05 -0.6 14.50 3Q15.95 6.6 17.40 3Q18.85 -0.6 20.30 3Q21.75 6.6 23.20 3Q24.65 -0.6 26.10 3Q27.55 6.6 29.00 3Q30.45 -0.6 31.90 3Q33.35 6.6 34.80 3Q36.25 -0.6 37.70 3Q39.15 6.6 40.60 3Q42.05 -0.6 43.50 3Q44.95 6.6 46.40 3Q47.85 -0.6 49.30 3Q50.75 6.6 52.20 3Q53.65 -0.6 55.10 3Q56.55 6.6 58.00 3Q59.45 -0.6 60.90 3Q62.35 6.6 63.80 3Q65.25 -0.6 66.70 3Q68.15 6.6 69.60 3Q71.05 -0.6 72.50 3Q73.95 6.6 75.40 3Q76.85 -0.6 78.30 3Q79.75 6.6 81.20 3Q82.65 -0.6 84.10 3Q85.55 6.6 87.00 3Q88.45 -0.6 89.90 3Q91.35 6.6 92.80 3Q94.25 -0.6 95.70 3Q97.15 6.6 98.60 3Q100.05 -0.6 101.50 3Q102.95 6.6 104.40 3" stroke="#d9ab1c" stroke-width="1.300"/></svg>
<svg class="b" style="left:600.5px;top:124.69999999999999px;" width="17" height="11" viewBox="0 0 17 11" fill="none" stroke-linecap="round" stroke-linejoin="round"><path d="M2 2l6.500 6.500L15 2" stroke="#d4d4d4" stroke-width="1.500"/></svg>
<svg class="b" style="left:600.5px;top:601.52px;" width="17" height="11" viewBox="0 0 17 11" fill="none" stroke-linecap="round" stroke-linejoin="round"><path d="M2 2l6.500 6.500L15 2" stroke="#d4d4d4" stroke-width="1.500"/></svg>
<div class="b" style="left:623px;top:646.4px;width:1.2px;height:342.6px;background:#7a7a7c;"></div>
<div class="b" style="left:665.6px;top:831.8px;width:1.2px;height:53.0px;background:#414144;"></div>
<div class="b" style="left:665.6px;top:964.3px;width:1.2px;height:24.7px;background:#414144;"></div>
<div class="b" style="left:1186px;top:116px;width:1px;height:873px;background:#222225;"></div>
<div class="b" style="left:1194.5px;top:163px;width:8.5px;height:118px;background:#d4aa0e;"></div>
<div class="b" style="left:1186px;top:963.7px;width:17.5px;height:3px;background:#a8a8a8;"></div>
<div class="b" style="left:511px;top:1007px;width:692px;height:1px;background:#38383b;"></div>
<div class="t d" style="letter-spacing:-0.110px;left:535.40px;top:1038px;font-size:15.4px;color:#c6c6c6;">Line: 32 Col: 18</div>
<div class="b" style="left:923px;top:1022px;width:113.5px;height:45.3px;background:#2edb5b;border-radius:5px;"></div>
<div class="t" style="letter-spacing:0.015px;left:937.70px;top:1038px;font-size:17.6px;color:#0c1410;font-weight:700;">Run Code</div>
<div class="b" style="left:1061.3px;top:1022px;width:116.7px;height:45.3px;background:#25252a;border:1px solid #74747a;border-radius:5px;"></div>
<div class="t" style="letter-spacing:0.050px;left:1077.70px;top:1038px;font-size:17.6px;color:#fff;font-weight:700;">Run Tests</div>
<div class="b" style="left:1203px;top:54px;width:7px;height:1026px;background:#333336;"></div>
<div class="b" style="left:1207px;top:575.5px;width:2px;height:2px;background:#8296ac;"></div>
<div class="b" style="left:1207px;top:580.5px;width:2px;height:2px;background:#8296ac;"></div>
<div class="b" style="left:1207px;top:585.5px;width:2px;height:2px;background:#8296ac;"></div>
<div class="b" style="left:1207px;top:590.5px;width:2px;height:2px;background:#8296ac;"></div>
<!-- right -->
<div class="t" style="letter-spacing:-0.069px;left:1234.40px;top:84px;font-size:17.6px;color:#fff;font-weight:700;">Suspicious Signals (4)</div>
<div class="t r" style="letter-spacing:0.047px;left:1234.40px;top:106px;font-size:15.8px;color:#c4c4c6;">(visible only to you)</div>
<div class="b" style="left:1210px;top:148px;width:642px;height:1px;background:#353538;"></div>
<svg class="b" style="left:1695px;top:89px;" width="22" height="24" viewBox="0 0 22 24" fill="none" stroke-linecap="round" stroke-linejoin="round"><path d="M3.300 16.500c1.500-1.600 2.200-3.400 2.200-6.700 0-3.700 2.300-6.900 5.600-6.900s5.600 3.200 5.600 6.900c0 3.300.7 5.100 2.200 6.700z" stroke="#d6d6d8" stroke-width="1.400"/><path d="M8.900 19.400c.5 1 1.300 1.500 2.200 1.500s1.700-.5 2.200-1.500" stroke="#d6d6d8" stroke-width="1.400"/></svg>
<div class="t" style="letter-spacing:1.413px;left:1725.90px;top:94px;font-size:17.6px;color:#c2c2c8;font-weight:700;">Mute</div>
<svg class="b" style="left:1798px;top:91px;" width="26" height="20" viewBox="0 0 26 20" fill="none" stroke-linecap="round" stroke-linejoin="round"><path d="M3.200 5.500l5.400 4.500-5.400 4.500" stroke="#d6d6d8" stroke-width="1.500"/><path d="M10.200 2.500H22M13.600 7.600H22M13.600 12.700H22M10.200 17.200H22" stroke="#d6d6d8" stroke-width="1.400" stroke-linecap="butt"/></svg>
<div class="b" style="left:1235px;top:169px;width:593px;height:345.5px;border:1px solid #2b2b2a;border-radius:17px;"></div>
<div class="b" style="left:1256.2px;top:205.7px;width:40.5px;height:40.2px;background:#19191d;border:1px solid #302f2c;border-radius:3px;"></div>
<svg class="b" style="left:1256.5px;top:205.7px;" width="40" height="40" viewBox="0 0 40 40" fill="none" stroke-linecap="round" stroke-linejoin="round"><path d="M14 16.500h8.600M14 16.500l2.400-2.400M14 16.500l2.400 2.400" stroke="#77777a" stroke-width="1.300"/><path d="M17.800 24h9.200M27 24l-2.400-2.400M27 24l-2.400 2.400" stroke="#77777a" stroke-width="1.300"/></svg>
<div class="t r" style="letter-spacing:0.338px;left:1306.90px;top:210px;font-size:18.0px;color:#68686a;">Out-of-Interview for 44s</div>
<div class="t r" style="letter-spacing:-0.253px;left:1752.40px;top:209px;font-size:15.8px;color:#77777a;">15s ago</div>
<div class="b" style="left:1256.2px;top:296.7px;width:40.5px;height:40.2px;background:#19191d;border:1px solid #302f2c;border-radius:3px;"></div>
<svg class="b" style="left:1256.5px;top:296.7px;" width="40" height="40" viewBox="0 0 40 40" fill="none" stroke-linecap="round" stroke-linejoin="round"><path d="M14 16.500h8.600M14 16.500l2.400-2.400M14 16.500l2.400 2.400" stroke="#77777a" stroke-width="1.300"/><path d="M17.800 24h9.200M27 24l-2.400-2.400M27 24l-2.400 2.400" stroke="#77777a" stroke-width="1.300"/></svg>
<div class="t r" style="letter-spacing:0.354px;left:1306.90px;top:301px;font-size:18.0px;color:#68686a;">Out-of-Interview for 7s</div>
<div class="t r" style="letter-spacing:-0.110px;left:1751.40px;top:300px;font-size:15.8px;color:#77777a;">41s ago</div>
<div class="b" style="left:1256.2px;top:387.7px;width:40.5px;height:40.2px;background:#19191d;border:1px solid #302f2c;border-radius:3px;"></div>
<svg class="b" style="left:1256.5px;top:387.7px;" width="40" height="40" viewBox="0 0 40 40" fill="none" stroke-linecap="round" stroke-linejoin="round"><path d="M15.500 16.800l-3.300 3.300 3.300 3.300M24.500 16.800l3.300 3.300-3.300 3.300M21.800 14.800l-3.600 10.600" stroke="#77777a" stroke-width="1.300"/></svg>
<div class="t r" style="letter-spacing:0.004px;left:1306.90px;top:392px;font-size:18.0px;color:#68686a;">Code pasted (16 lines)</div>
<div class="t r" style="letter-spacing:-0.110px;left:1751.40px;top:390px;font-size:15.8px;color:#77777a;">45s ago</div>
<div class="t r" style="letter-spacing:-0.051px;left:1266.15px;top:468px;font-size:18.0px;color:#68686a;">Analyzing Suspicious Signals</div>
<div class="b" style="left:1235px;top:535px;width:593px;height:73px;background:#1b1b1d;border:1px solid #3a3934;border-radius:8px;"></div>
<div class="b" style="left:1246.2px;top:551.2px;width:40.5px;height:40.5px;background:#1f1f1f;border:1px solid #48474a;border-radius:3px;"></div>
<svg class="b" style="left:1246.5px;top:551.5px;" width="40" height="40" viewBox="0 0 40 40" fill="none" stroke-linecap="round" stroke-linejoin="round"><path d="M14 16.500h8.600M14 16.500l2.400-2.400M14 16.500l2.400 2.400" stroke="#f4f4f4" stroke-width="1.300"/><path d="M17.800 24h9.200M27 24l-2.400-2.400M27 24l-2.400 2.400" stroke="#f4f4f4" stroke-width="1.300"/></svg>
<div class="t r" style="letter-spacing:0.464px;left:1296.40px;top:556px;font-size:18.0px;color:#f4f4f4;">Out-of-Interview multiple times</div>
<div class="t r" style="letter-spacing:-0.001px;left:1737.20px;top:554px;font-size:15.8px;color:#d6d6d6;">1m ago</div>
<svg class="b" style="left:1799px;top:555px;" width="17" height="11" viewBox="0 0 17 11" fill="none" stroke-linecap="round" stroke-linejoin="round"><path d="M2.300 2l6 5.800 6-5.800" stroke="#d8d8d8" stroke-width="1.400"/></svg>
<div class="b" style="left:1245px;top:643.2px;width:40.2px;height:40.4px;background:#1f1f1f;border:1px solid #4a4a4a;border-radius:3px;"></div>
<svg class="b" style="left:1245px;top:643.2px;" width="40" height="40" viewBox="0 0 40 40" fill="none" stroke-linecap="round" stroke-linejoin="round"><rect x="13" y="13.600" width="14.500" height="11" rx="3.600" stroke="#dcdcdc" stroke-width="1.400"/><path d="M20.200 11.700v1.900M20.200 24.800l-3 3.200M20.200 24.800l3 3.200M18 27.300h4.400" stroke="#dcdcdc" stroke-width="1.300"/></svg>
<div class="t r" style="letter-spacing:0.258px;left:1295.15px;top:648px;font-size:18.0px;color:#cacaca;">Permission denied to detect usage of multiple screens</div>
<div class="t r" style="letter-spacing:0.083px;left:1764.70px;top:646px;font-size:15.8px;color:#d6d6d6;">4m ago</div>
<div class="b" style="left:1245px;top:734.2px;width:40.2px;height:40.4px;background:#1f1f1f;border:1px solid #4a4a4a;border-radius:3px;"></div>
<svg class="b" style="left:1245px;top:734.2px;" width="40" height="40" viewBox="0 0 40 40" fill="none" stroke-linecap="round" stroke-linejoin="round"><rect x="13" y="13.600" width="14.500" height="11" rx="3.600" stroke="#dcdcdc" stroke-width="1.400"/><path d="M20.200 11.700v1.900M20.200 24.800l-3 3.200M20.200 24.800l3 3.200M18 27.300h4.400" stroke="#dcdcdc" stroke-width="1.300"/></svg>
<div class="t r" style="letter-spacing:0.302px;left:1294.40px;top:739px;font-size:18.0px;color:#cacaca;">Joined with a single monitor and normal window size</div>
<div class="t r" style="letter-spacing:0.083px;left:1764.70px;top:737px;font-size:15.8px;color:#d6d6d6;">5m ago</div>
<div class="b" style="left:1852px;top:54px;width:1px;height:1026px;background:#2e2e32;"></div>
<svg class="b" style="left:1873px;top:71px;" width="22" height="25" viewBox="0 0 22 25" fill="none" stroke-linecap="round" stroke-linejoin="round"><rect x="2.500" y="3.600" width="16.200" height="18.800" rx="4.600" stroke="#cfcfd2" stroke-width="1.500"/><rect x="6.800" y="1.700" width="7.600" height="3.900" rx="1.900" stroke="#cfcfd2" stroke-width="1.400" fill="#121214"/><path d="M7 11h7.200M7 16h7.200" stroke="#cfcfd2" stroke-width="1.500"/></svg>
<div class="b" style="left:1872px;top:134.8px;width:23px;height:23px;border:1.500px solid #cfcfd2;border-radius:3px;"></div>
<div class="t" style="letter-spacing:0.768px;left:1876.10px;top:142px;font-size:9.6px;color:#fff;font-weight:700;">I/O</div>
<div class="b" style="left:1861px;top:187px;width:45px;height:45px;background:#1f1f1f;border-radius:6px;"></div>
<svg class="b" style="left:1872px;top:196px;" width="24" height="26" viewBox="0 0 24 26" fill="none" stroke-linecap="round" stroke-linejoin="round"><path d="M3.600 23.500V4.500" stroke="#fff" stroke-width="1.900"/><path d="M3.600 4.600C6 2.400 9 3.300 12 5.100S17 6.400 19.600 4.600V16C17 17.800 14.500 17.700 12 16.300S6.500 13.600 3.600 15.600" stroke="#fff" stroke-width="1.900"/></svg>
<svg class="b" style="left:1871px;top:259px;" width="26" height="26" viewBox="0 0 26 26" fill="none" stroke-linecap="round" stroke-linejoin="round"><path d="M13 2C15 6.400 19.400 11 23.800 13C19.400 15 15 19.600 13 24C11 19.600 6.600 15 2.200 13C6.600 11 11 6.400 13 2z" stroke="#d4d4d6" stroke-width="1.800"/><circle cx="13" cy="13" r="1.900" fill="#1ea84a"/></svg>
<svg class="b" style="left:1872px;top:1045px;" width="20" height="22" viewBox="0 0 20 22" fill="none" stroke-linecap="round" stroke-linejoin="round"><path d="M11.500 3.200a4 4 0 0 0-5 3.900v3.800a4 4 0 0 0 6.800 2.800" stroke="#b4b4b8" stroke-width="1.300"/><path d="M3.400 11.600a6.600 6.600 0 0 0 12.300 2.300M9.600 17.500v2.300" stroke="#b4b4b8" stroke-width="1.300"/></svg>
<svg class="b" style="left:1882px;top:1047px;" width="7" height="8" viewBox="0 0 7 8" fill="none" stroke-linecap="round" stroke-linejoin="round"><path d="M1.400 3.600l2.600-1.800.9 4.300z" stroke="#c8c8cc" stroke-width="0.900"/></svg>
<div class="b" style="left:1886.7px;top:1043.1px;width:12.6px;height:12.6px;background:#f2626e;border-radius:50%;"></div>
<div class="t" style="left:1891.60px;top:1046px;font-size:9px;color:#1a0a0c;font-weight:700;">i</div>
<svg class="b" style="left:1686px;top:865px;" width="18" height="26" viewBox="0 0 18 26" fill="none" stroke-linecap="round" stroke-linejoin="round"><path d="M3.500 2.500v17.500l4.300-3.700 2.800 6.400 2.600-1.100-2.800-6.300h5.600z" fill="#121214" stroke="#f4f4f4" stroke-width="1.800" stroke-linejoin="miter"/></svg>
</div>
</body>
</html>
